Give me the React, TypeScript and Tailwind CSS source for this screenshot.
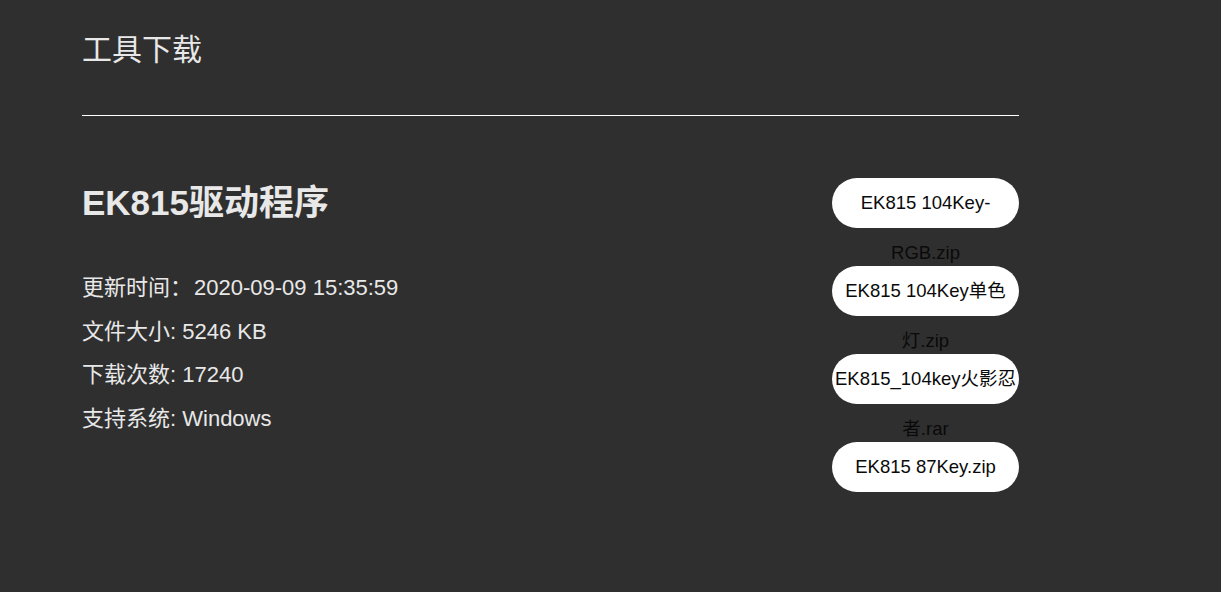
import React from 'react';

const files = [
  'EK815 104Key-RGB.zip',
  'EK815 104Key单色灯.zip',
  'EK815_104key火影忍者.rar',
  'EK815 87Key.zip',
];

const info = [
  ['更新时间：', '2020-09-09 15:35:59'],
  ['文件大小:', ' 5246 KB'],
  ['下载次数:', ' 17240'],
  ['支持系统:', ' Windows'],
];

function App() {
  return (
    <div
      className="min-h-screen w-full bg-[#2f2f2f] text-[#e8e8e8]"
      style={{ fontFamily: '"Liberation Sans", "Noto Sans CJK SC", sans-serif' }}
    >
      <div className="ml-[82px] w-[937px]">
        {/* header */}
        <h1 className="pt-[28px] h-[115px] text-[30px] leading-[44px] font-normal">工具下载</h1>
        <div className="h-px bg-white" />

        {/* driver block */}
        <div className="flex justify-between pt-[62px]">
          <div>
            <h2 className="text-[35px] leading-[50px] font-bold">EK815驱动程序</h2>
            <div className="mt-[38px] flex flex-col text-[22px] leading-[43.5px]">
              {info.map(([k, v]) => (
                <div key={k} className="whitespace-pre">
                  {k}
                  {k.endsWith('：') ? <span className="ml-[2px]">{v}</span> : v}
                </div>
              ))}
            </div>
          </div>

          <div className="flex flex-col gap-[38px] w-[187px]">
            {files.map(f => (
              <button
                key={f}
                className="h-[50px] w-[187px] rounded-full bg-white text-[#0a0a0a] text-[18.5px] leading-[50px] text-center"
              >
                {f}
              </button>
            ))}
          </div>
        </div>
      </div>
    </div>
  );
}

export default App;
